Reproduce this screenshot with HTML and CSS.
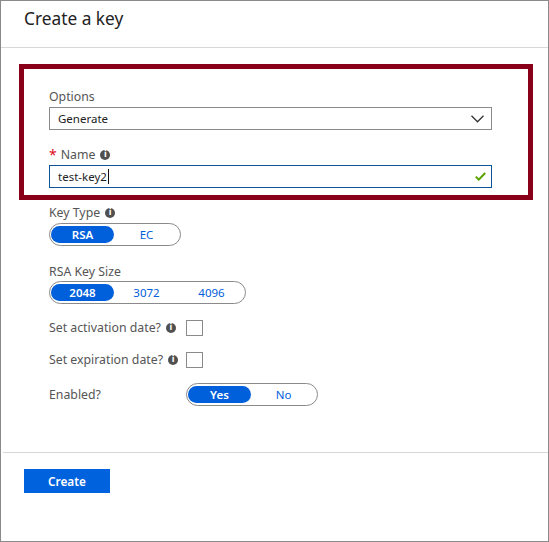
FILE: index.html
```html
<!DOCTYPE html>
<html lang="en">
<head>
<meta charset="utf-8">
<title>Create a key</title>
<link rel="stylesheet" href="styles.css">
</head>
<body>
<div class="panel">
  <div class="header">
    <h1 class="title">Create a key</h1>
  </div>
  <div class="body">
    <div class="highlight">
      <div class="field">
        <div class="label">Options</div>
        <div class="select">
          <span>Generate</span>
          <svg class="chev" width="13" height="8" viewBox="0 0 13 8"><path d="M0.5 0.8 L6.5 6.8 L12.5 0.8" fill="none" stroke="#333" stroke-width="1.3"/></svg>
        </div>
      </div>
      <div class="field field-name">
        <div class="label"><span class="req">*</span> Name <span class="info">i</span></div>
        <div class="input">
          <span>test-key2<span class="caret"></span></span>
          <svg class="check" width="11" height="9" viewBox="0 0 11 9"><path d="M0.8 4.6 L3.8 7.6 L10.2 1" fill="none" stroke="#57a300" stroke-width="2"/></svg>
        </div>
      </div>
    </div>

    <div class="label lbl-keytype">Key Type <span class="info">i</span></div>
    <div class="toggle">
      <span class="seg on">RSA</span>
      <span class="seg">EC</span>
    </div>

    <div class="label lbl-size">RSA Key Size</div>
    <div class="toggle toggle-size">
      <span class="seg on">2048</span>
      <span class="seg">3072</span>
      <span class="seg">4096</span>
    </div>

    <div class="row row-act">
      <div class="label">Set activation date? <span class="info">i</span></div>
      <span class="checkbox"></span>
    </div>
    <div class="row row-exp">
      <div class="label">Set expiration date? <span class="info">i</span></div>
      <span class="checkbox"></span>
    </div>
    <div class="row row-en">
      <div class="label">Enabled?</div>
      <div class="toggle">
        <span class="seg on">Yes</span>
        <span class="seg">No</span>
      </div>
    </div>
  </div>
  <div class="footer">
    <button class="btn">Create</button>
  </div>
</div>
</body>
</html>
```

FILE: styles.css
```css
* { box-sizing: border-box; }
html, body { margin: 0; padding: 0; background: #fff; }
body {
  font-family: "Noto Sans", "Open Sans", sans-serif;
  color: #333;
}
.panel {
  width: 549px;
  height: 542px;
  border: 1px solid #8a8a8a;
  display: flex;
  flex-direction: column;
}
.header {
  height: 47px;
  border-bottom: 1px solid #d8d8d8;
  padding: 6px 0 0 23px;
}
.title {
  margin: 0;
  font-size: 17.3px;
  font-weight: 400;
  line-height: 24px;
  color: #222;
}
.body {
  flex: 1;
  padding: 16px 0 0 48px;
}
.highlight {
  width: 514px;
  height: 136px;
  margin-left: -30px;
  border: 5px solid #8a0018;
  padding: 20px 36px 0 25px;
}
.label {
  font-size: 12.3px;
  line-height: 16px;
  color: #555;
  display: flex;
  align-items: center;
  gap: 4px;
}
.field .label { margin-bottom: 2px; }
.field-name { margin-top: 17px; }
.req { color: #e00b1c; font-size: 14px; }
.info {
  display: inline-flex;
  align-items: center;
  justify-content: center;
  width: 10px;
  height: 10px;
  border-radius: 50%;
  background: #505050;
  color: #fff;
  font-size: 8px;
  font-weight: 700;
  line-height: 1;
  font-family: "DejaVu Sans", sans-serif;
  margin-left: 1px;
}
.select, .input {
  height: 23px;
  display: flex;
  align-items: center;
  justify-content: space-between;
  padding: 0 7px 0 8px;
  font-size: 11.5px;
  color: #222;
}
.select { border: 1px solid #8a8a8a; }
.input { border: 1px solid #0f5499; padding-right: 4px; }
.caret {
  display: inline-block;
  width: 1px;
  height: 15px;
  background: #111;
  vertical-align: -3px;
  margin-left: 1px;
}
.check { margin-right: 1px; }
.lbl-keytype { margin-top: 5px; }
.toggle {
  display: inline-flex;
  height: 23px;
  border: 1px solid #8a8a8a;
  border-radius: 12px;
  padding: 2px 1px;
  margin-top: 2px;
}
.seg {
  width: 65px;
  display: flex;
  align-items: center;
  justify-content: center;
  font-size: 11.5px;
  color: #0060dc;
  border-radius: 9px;
}
.seg.on {
  background: #0060dc;
  color: #fff;
  font-weight: 600;
  width: 63px;
}
.lbl-size { margin-top: 18px; }
.toggle-size { margin-top: 1px; }
.row {
  display: grid;
  grid-template-columns: 137px auto;
  align-items: center;
  justify-items: start;
}
.row-act { margin-top: 16px; }
.row-exp { margin-top: 16px; }
.row-en { margin-top: 15px; }
.row-en .toggle { margin-top: 0; }
.checkbox {
  width: 17px;
  height: 16px;
  border: 1px solid #8a8a8a;
  background: #fff;
}
.footer {
  height: 89px;
  border-top: 1px solid #d8d8d8;
  margin-left: 2px;
  padding: 16px 0 0 21px;
}
.btn {
  display: block;
  width: 86px;
  height: 24px;
  border: 0;
  background: #0062dd;
  color: #fff;
  font-family: "Noto Sans", "Open Sans", sans-serif;
  font-size: 11.8px;
  font-weight: 600;
  padding: 0;
  cursor: pointer;
}
```
